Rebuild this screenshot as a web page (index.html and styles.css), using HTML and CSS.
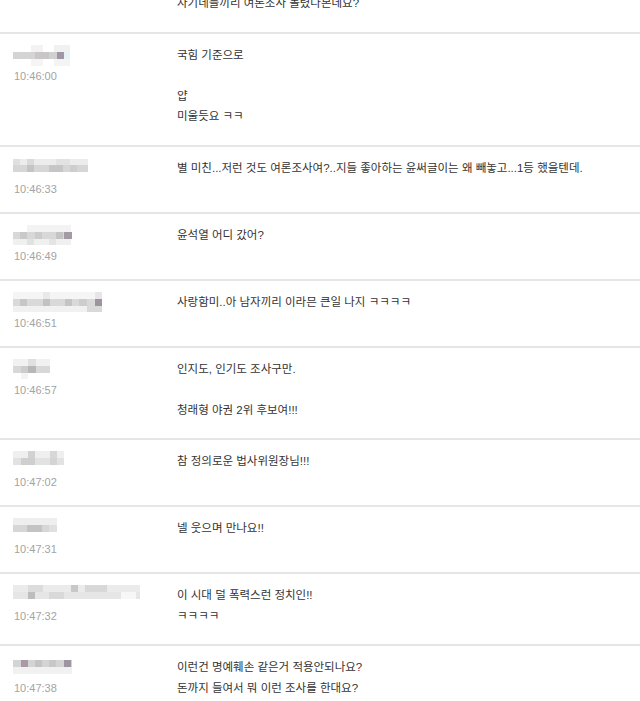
FILE: index.html
```html
<!DOCTYPE html>
<html lang="ko">
<head>
    <meta charset="UTF-8">
    <meta name="viewport" content="width=device-width, initial-scale=1.0">
    <title>댓글</title>
    <link rel="stylesheet" href="styles.css">
</head>
<body>
    <div class="comments">
        <!-- cut off at the top of the viewport -->
        <div class="row first">
            <div class="who"></div>
            <div class="msg"><p>자기네들끼리 여론조사 돌렸나본데요?</p></div>
        </div>

        <div class="row">
            <div class="who">
                <svg class="nick" width="120" height="21">
                    <rect x="18" y="0" width="12" height="7" fill="#f3f3f3"/>
                    <rect x="41" y="0" width="16" height="7" fill="#f1f1f1"/>
                    <rect x="0" y="7" width="22" height="7" fill="#d4d4d4"/>
                    <rect x="22" y="7" width="14" height="7" fill="#c8c6c6"/>
                    <rect x="36" y="7" width="8" height="7" fill="#d0d0d0"/>
                    <rect x="44" y="7" width="7" height="7" fill="#9f97a5"/>
                    <rect x="51" y="7" width="6" height="7" fill="#e8f1f3"/>
                    <rect x="18" y="14" width="12" height="7" fill="#f5f5f5"/>
                    <rect x="41" y="14" width="16" height="7" fill="#f4f4f4"/>
                </svg>
                <div class="time">10:46:00</div>
            </div>
            <div class="msg"><p>국힘 기준으로<br><br>얍<br>미울듯요 ㅋㅋ</p></div>
        </div>

        <div class="row">
            <div class="who">
                <svg class="nick" width="120" height="21">
                    <rect x="0" y="1" width="75" height="6" fill="#ececec"/>
                    <rect x="0" y="1" width="7" height="6" fill="#e0e0e0"/>
                    <rect x="14" y="1" width="7" height="6" fill="#dadada"/>
                    <rect x="43" y="1" width="14" height="6" fill="#e2e2e2"/>
                    <rect x="0" y="7" width="75" height="7" fill="#d6d6d6"/>
                    <rect x="14" y="7" width="7" height="7" fill="#c4c4c4"/>
                    <rect x="36" y="7" width="14" height="7" fill="#c6c6c6"/>
                    <rect x="57" y="7" width="7" height="7" fill="#cdcdcd"/>
                </svg>
                <div class="time">10:46:33</div>
            </div>
            <div class="msg"><p>별 미친...저런 것도 여론조사여?..지들 좋아하는 윤써글이는 왜 빼놓고...1등 했을텐데.</p></div>
        </div>

        <div class="row">
            <div class="who">
                <svg class="nick" width="120" height="21">
                    <rect x="14" y="0" width="44" height="7" fill="#f3f3f3"/>
                    <rect x="0" y="7" width="58" height="7" fill="#d8d8d8"/>
                    <rect x="7" y="7" width="7" height="7" fill="#c9c9c9"/>
                    <rect x="22" y="7" width="7" height="7" fill="#cccccc"/>
                    <rect x="43" y="7" width="7" height="7" fill="#c4c4c4"/>
                    <rect x="51" y="7" width="8" height="7" fill="#a39aa5"/>
                    <rect x="0" y="14" width="58" height="6" fill="#f0f0f0"/>
                    <rect x="14" y="14" width="7" height="6" fill="#e2e2e2"/>
                    <rect x="36" y="14" width="7" height="6" fill="#e4e4e4"/>
                </svg>
                <div class="time">10:46:49</div>
            </div>
            <div class="msg"><p>윤석열 어디 갔어?</p></div>
        </div>

        <div class="row">
            <div class="who">
                <svg class="nick" width="120" height="21">
                    <rect x="0" y="0" width="89" height="7" fill="#f5f5f5"/>
                    <rect x="30" y="0" width="7" height="7" fill="#e9e9e9"/>
                    <rect x="82" y="0" width="7" height="7" fill="#e6e6e6"/>
                    <rect x="0" y="7" width="89" height="7" fill="#d9d9d9"/>
                    <rect x="7" y="7" width="7" height="7" fill="#c6c6c6"/>
                    <rect x="30" y="7" width="7" height="7" fill="#c2c2c2"/>
                    <rect x="52" y="7" width="7" height="7" fill="#c4c4c4"/>
                    <rect x="66" y="7" width="8" height="7" fill="#cdcdcd"/>
                    <rect x="82" y="7" width="7" height="7" fill="#9e949f"/>
                    <rect x="0" y="14" width="89" height="6" fill="#f1f1f1"/>
                    <rect x="74" y="14" width="15" height="6" fill="#d9d9d9"/>
                </svg>
                <div class="time">10:46:51</div>
            </div>
            <div class="msg"><p>사랑함미..아 남자끼리 이라믄 큰일 나지 ㅋㅋㅋㅋ</p></div>
        </div>

        <div class="row">
            <div class="who">
                <svg class="nick" width="120" height="21">
                    <rect x="0" y="0" width="37" height="7" fill="#f1f1f1"/>
                    <rect x="15" y="0" width="8" height="7" fill="#e0e0e0"/>
                    <rect x="0" y="7" width="37" height="7" fill="#d8d8d8"/>
                    <rect x="15" y="7" width="8" height="7" fill="#b9b6b6"/>
                    <rect x="8" y="7" width="7" height="7" fill="#cccccc"/>
                    <rect x="8" y="14" width="7" height="6" fill="#f3f3f3"/>
                </svg>
                <div class="time">10:46:57</div>
            </div>
            <div class="msg"><p>인지도, 인기도 조사구만.<br><br>청래형 야권 2위 후보여!!!</p></div>
        </div>

        <div class="row">
            <div class="who">
                <svg class="nick" width="120" height="21">
                    <rect x="0" y="0" width="51" height="7" fill="#efefef"/>
                    <rect x="15" y="0" width="7" height="7" fill="#d2d2d2"/>
                    <rect x="37" y="0" width="7" height="7" fill="#d7d7d7"/>
                    <rect x="0" y="7" width="51" height="7" fill="#e2e2e2"/>
                    <rect x="8" y="7" width="14" height="7" fill="#cfcfcf"/>
                    <rect x="37" y="7" width="7" height="7" fill="#d4d4d4"/>
                </svg>
                <div class="time">10:47:02</div>
            </div>
            <div class="msg"><p>참 정의로운 법사위원장님!!!</p></div>
        </div>

        <div class="row">
            <div class="who">
                <svg class="nick" width="120" height="21">
                    <rect x="0" y="0" width="44" height="7" fill="#eeeeee"/>
                    <rect x="0" y="7" width="44" height="7" fill="#d6d6d6"/>
                    <rect x="14" y="7" width="15" height="7" fill="#c3c3c3"/>
                    <rect x="36" y="7" width="8" height="7" fill="#e0e0e0"/>
                </svg>
                <div class="time">10:47:31</div>
            </div>
            <div class="msg"><p>넬 웃으며 만나요!!</p></div>
        </div>

        <div class="row">
            <div class="who">
                <svg class="nick" width="130" height="21">
                    <rect x="0" y="0" width="127" height="7" fill="#ebebeb"/>
                    <rect x="15" y="0" width="15" height="7" fill="#dcdcdc"/>
                    <rect x="58" y="0" width="7" height="7" fill="#c8c8c8"/>
                    <rect x="72" y="0" width="22" height="7" fill="#d8d8d8"/>
                    <rect x="0" y="7" width="127" height="7" fill="#e6e6e6"/>
                    <rect x="15" y="7" width="7" height="7" fill="#bdbdbd"/>
                    <rect x="36" y="7" width="15" height="7" fill="#d9d9d9"/>
                    <rect x="108" y="7" width="15" height="7" fill="#f7f7f7"/>
                </svg>
                <div class="time">10:47:32</div>
            </div>
            <div class="msg"><p>이 시대 덜 폭력스런 정치인!!<br>ㅋㅋㅋㅋ</p></div>
        </div>

        <div class="row">
            <div class="who">
                <svg class="nick" width="120" height="21">
                    <rect x="0" y="3" width="59" height="7" fill="#d4d4d4"/>
                    <rect x="8" y="3" width="7" height="7" fill="#a99aa6"/>
                    <rect x="22" y="3" width="7" height="7" fill="#c4c4c4"/>
                    <rect x="36" y="3" width="7" height="7" fill="#c8c8c8"/>
                    <rect x="51" y="3" width="7" height="7" fill="#9e95a2"/>
                    <rect x="0" y="10" width="59" height="7" fill="#f1f1f1"/>
                </svg>
                <div class="time">10:47:38</div>
            </div>
            <div class="msg"><p>이런건 명예훼손 같은거 적용안되나요?<br>돈까지 들여서 뭐 이런 조사를 한대요?</p></div>
        </div>
    </div>
</body>
</html>
```

FILE: styles.css
```css
* {
    margin: 0;
    padding: 0;
    box-sizing: border-box;
}

body {
    background: #fff;
    font-family: "Liberation Sans", "Noto Sans CJK KR", sans-serif;
    color: #333;
    overflow: hidden;
}

.comments {
    width: 640px;
}

.row {
    display: grid;
    grid-template-columns: 164px 1fr;
    padding: 11px 0 13px 13px;
    border-top: 2px solid #e6e6e6;
}

.row.first {
    border-top: none;
    padding-top: 0;
    margin-top: -7px;
}

.who {
    display: flex;
    flex-direction: column;
}

.nick {
    display: block;
    height: 21px;
}

.time {
    font-size: 11px;
    line-height: 20px;
    padding-left: 1px;
    color: #a3a3a3;
}

.msg {
    padding-bottom: 5px;
}

.msg p {
    font-size: 11.5px;
    line-height: 20.5px;
    color: #333;
}
```
